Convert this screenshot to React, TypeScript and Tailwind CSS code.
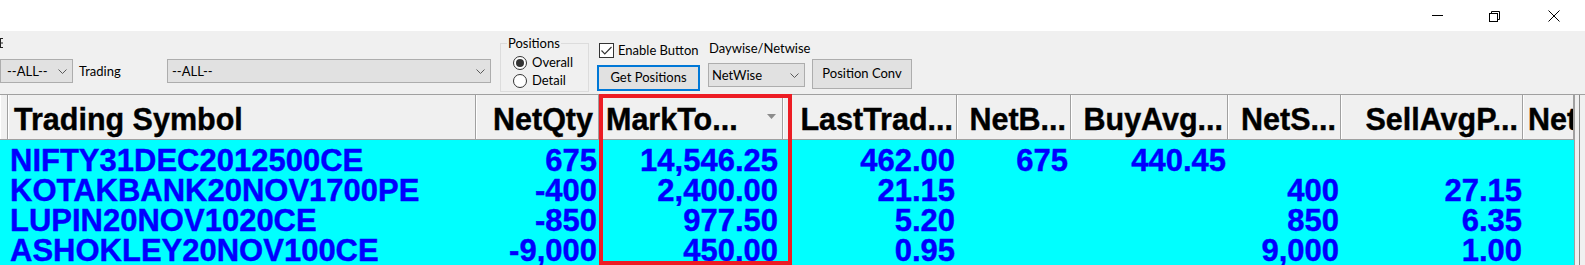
import React from 'react';

type Col = { label: string; head: string; cell: string; sort?: boolean };

const columns: Col[] = [
  { label: '', head: '', cell: '' },
  { label: 'Trading Symbol', head: 'justify-start pl-[6px]', cell: 'justify-start pl-[2px]' },
  { label: 'NetQty', head: 'justify-end pr-[5px]', cell: 'justify-end pr-[2px]' },
  { label: 'MarkTo...', head: 'justify-start pl-[7px]', cell: 'justify-end pr-[5px]', sort: true },
  { label: 'LastTrad...', head: 'justify-end pr-[3px]', cell: 'justify-end pr-[2px]' },
  { label: 'NetB...', head: 'justify-end pr-[4px]', cell: 'justify-end pr-[3px]' },
  { label: 'BuyAvg...', head: 'justify-end pr-[4px]', cell: 'justify-end pr-[2px]' },
  { label: 'NetS...', head: 'justify-end pr-[4px]', cell: 'justify-end pr-[2px]' },
  { label: 'SellAvgP...', head: 'justify-end pr-[4px]', cell: 'justify-end pr-[1px]' },
  { label: 'Net', head: 'justify-start pl-[5px]', cell: 'justify-end pr-[2px]' },
];

const rows: string[][] = [
  ['', 'NIFTY31DEC2012500CE', '675', '14,546.25', '462.00', '675', '440.45', '', '', ''],
  ['', 'KOTAKBANK20NOV1700PE', '-400', '2,400.00', '21.15', '', '', '400', '27.15', ''],
  ['', 'LUPIN20NOV1020CE', '-850', '977.50', '5.20', '', '', '850', '6.35', ''],
  ['', 'ASHOKLEY20NOV100CE', '-9,000', '450.00', '0.95', '', '', '9,000', '1.00', ''],
];

const gridCols = 'grid grid-cols-[8px_468px_123px_184px_174px_114px_157px_113px_182px_51px]';

function Chevron() {
  return (
    <svg width="9" height="5" viewBox="0 0 9 5" className="shrink-0">
      <path d="M0.5 0.5L4.5 4.5L8.5 0.5" fill="none" stroke="#5a5a5a" strokeWidth="1" />
    </svg>
  );
}

function Combo({ text, className }: { text: string; className: string }) {
  return (
    <div className={`flex h-[24px] items-center justify-between border border-[#adadad] bg-[#e1e1e1] pr-[5px] ${className}`}>
      <span className="pt-[1px] leading-none">{text}</span>
      <Chevron />
    </div>
  );
}

function Radio({ checked, label }: { checked?: boolean; label: string }) {
  return (
    <div className="flex h-[18px] items-center gap-[5px]">
      <div className="flex h-[14px] w-[14px] items-center justify-center rounded-full border border-[#333333] bg-white">
        {checked && <div className="h-[8px] w-[8px] rounded-full bg-[#333333]" />}
      </div>
      <span>{label}</span>
    </div>
  );
}

function TitleBar() {
  return (
    <div className="flex h-[31px] justify-end bg-white">
      <div className="flex w-[57px] items-center justify-center">
        <div className="h-px w-[11px] bg-black" />
      </div>
      <div className="flex w-[57px] items-center justify-center">
        <svg width="12" height="12" viewBox="0 0 12 12">
          <rect x="0.5" y="3.5" width="8" height="8" fill="none" stroke="#000" />
          <path d="M2.5 3.5V1.5H10.5V9.5H8.5" fill="none" stroke="#000" />
        </svg>
      </div>
      <div className="flex w-[62px] items-center justify-center">
        <svg width="12" height="12" viewBox="0 0 12 12">
          <path d="M0.5 0.5L11.5 11.5M11.5 0.5L0.5 11.5" stroke="#000" strokeWidth="1" />
        </svg>
      </div>
    </div>
  );
}

function Toolbar() {
  return (
    <div className="flex h-[63px] items-start bg-[#f0f0f0] font-['Lato',sans-serif] text-[13px] text-black">
      {/* grip + scope combo */}
      <div className="flex w-[73px] flex-col">
        <svg width="4" height="11" viewBox="0 0 4 11" className="mt-[7px]">
          <path d="M0 0.5H3M0 5H3M0 9.5H3M0.5 0V10" stroke="#222" strokeWidth="1" />
        </svg>
        <Combo text="--ALL--" className="mt-[10px] w-[73px] pl-[6px]" />
      </div>
      <div className="ml-[6px] mt-[28px] flex h-[24px] w-[88px] items-center pt-[2px]">Trading</div>
      <Combo text="--ALL--" className="mt-[28px] w-[324px] pl-[4px]" />

      {/* Positions group */}
      <fieldset className="ml-[9px] mt-[5px] h-[56px] w-[89px] border border-[#dcdcdc] px-[6px]">
        <legend className="px-[1px] leading-[14px]">Positions</legend>
        <div className="ml-[6px] mt-[4px] flex flex-col">
          <Radio checked label="Overall" />
          <Radio label="Detail" />
        </div>
      </fieldset>

      {/* enable + get positions */}
      <div className="ml-[8px] flex w-[103px] flex-col">
        <div className="ml-[2px] mt-[12px] flex h-[15px] items-center gap-[4px]">
          <div className="flex h-[15px] w-[15px] items-center justify-center border border-[#333333] bg-white">
            <svg width="11" height="9" viewBox="0 0 11 9">
              <path d="M0.5 4.5L3.8 7.8L10.5 1" fill="none" stroke="#333" strokeWidth="1.2" />
            </svg>
          </div>
          <span className="whitespace-nowrap">Enable Button</span>
        </div>
        <button className="mt-[7px] flex h-[26px] w-[103px] items-center justify-center border-2 border-[#0078d7] bg-[#e1e1e1]">
          Get Positions
        </button>
      </div>

      {/* daywise/netwise */}
      <div className="ml-[8px] flex w-[97px] flex-col">
        <div className="mt-[9px] whitespace-nowrap pl-[1px] leading-[16px]">Daywise/Netwise</div>
        <Combo text="NetWise" className="mt-[7px] w-[97px] pl-[3px]" />
      </div>

      <button className="ml-[7px] mt-[28px] flex h-[30px] w-[100px] items-center justify-center border border-[#adadad] bg-[#e1e1e1]">
        Position Conv
      </button>
    </div>
  );
}

function Grid() {
  return (
    <div className="flex h-[171px] border-t border-[#a0a0a0]">
      <div className="w-[1575px] overflow-hidden border-r border-[#a0a0a0] font-['Liberation_Sans',Arial,sans-serif] font-bold [-webkit-text-stroke:0.4px_currentColor]">
        {/* header */}
        <div className={`${gridCols} h-[45px] border-b border-[#a0a0a0] bg-[#f0f0f0]`}>
          {columns.map((c, i) => (
            <div
              key={i}
              className={`flex h-[44px] overflow-hidden whitespace-nowrap border-r border-[#a0a0a0] pt-[4px] text-[30.5px] leading-[40px] text-black shadow-[inset_1px_0_0_#ffffff] ${c.head}`}
            >
              <span>{c.label}</span>
              {c.sort && (
                <svg width="9" height="5" viewBox="0 0 9 5" className="ml-auto mr-[6px] mt-[15px] shrink-0">
                  <path d="M0 0H9L4.5 5Z" fill="#8c8c8c" />
                </svg>
              )}
            </div>
          ))}
        </div>
        {/* rows */}
        <div className="h-[125px] overflow-hidden bg-[#00ffff] pt-[6px]">
          {rows.map((r, ri) => (
            <div key={ri} className={`${gridCols} h-[30px]`}>
              {r.map((v, ci) => (
                <div
                  key={ci}
                  className={`flex overflow-hidden whitespace-nowrap text-[31px] leading-[30px] text-[#0000ff] ${columns[ci].cell}`}
                >
                  {v}
                </div>
              ))}
            </div>
          ))}
        </div>
      </div>
      <div className="flex w-[10px] bg-[#f0f0f0] pl-[4px]">
        <div className="h-full w-px bg-[#8a8a8a]" />
      </div>
    </div>
  );
}

export default function App() {
  return (
    <div className="relative h-[265px] w-[1585px] overflow-hidden bg-white">
      <TitleBar />
      <Toolbar />
      <Grid />
      {/* red annotation box */}
      <div className="pointer-events-none absolute left-[599px] top-[94px] h-[171px] w-[193px] border-4 border-[#ed1c24]" />
    </div>
  );
}
